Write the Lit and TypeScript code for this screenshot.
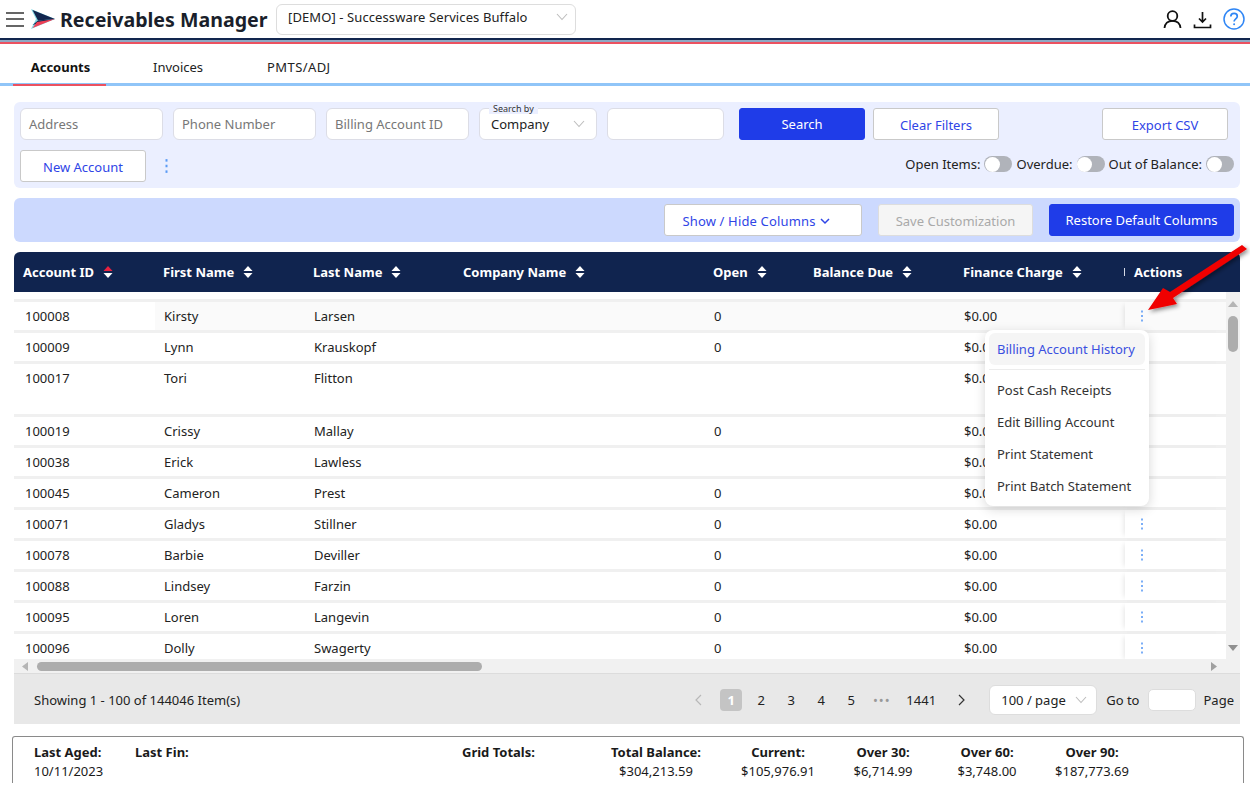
import { css, html, LitElement, nothing } from "lit";
import { customElement } from "lit/decorators.js";

const chevron = html`<svg class="chev" width="12" height="8" viewBox="0 0 12 8" fill="none" stroke="#bdbdbd" stroke-width="1.1"><path d="M1 1l5 5.5L11 1" /></svg>`;

const sorter = (active = false) => html`<svg class="sort" width="10" height="14" viewBox="0 0 10 14">
  <path d="M5 1l4.500 5h-9z" fill=${active ? "#e8213f" : "#fff"} />
  <path d="M5 13l4.500-5h-9z" fill="#fff" />
</svg>`;

const dots = html`<svg class="dots" width="4" height="12" viewBox="0 0 4 12" fill="#5b9bf5">
  <rect x="1.200" y="0.500" width="1.600" height="2" /><rect x="1.200" y="5" width="1.600" height="2" /><rect x="1.200" y="9.500" width="1.600" height="2" />
</svg>`;

const columns = [
  { label: "Account ID", active: true },
  { label: "First Name" },
  { label: "Last Name" },
  { label: "Company Name" },
  { label: "Open" },
  { label: "Balance Due" },
  { label: "Finance Charge" },
];

const rows = [
  ["100008", "Kirsty", "Larsen", "0"],
  ["100009", "Lynn", "Krauskopf", "0"],
  ["100017", "Tori", "Flitton", ""],
  ["100019", "Crissy", "Mallay", "0"],
  ["100038", "Erick", "Lawless", ""],
  ["100045", "Cameron", "Prest", "0"],
  ["100071", "Gladys", "Stillner", "0"],
  ["100078", "Barbie", "Deviller", "0"],
  ["100088", "Lindsey", "Farzin", "0"],
  ["100095", "Loren", "Langevin", "0"],
  ["100096", "Dolly", "Swagerty", "0"],
];

const totals = [
  ["Total Balance:", "$304,213.59"],
  ["Current:", "$105,976.91"],
  ["Over 30:", "$6,714.99"],
  ["Over 60:", "$3,748.00"],
  ["Over 90:", "$187,773.69"],
];

@customElement("app-root")
export class AppRoot extends LitElement {
  static styles = css`
    :host {
      display: block;
      position: relative;
      height: 791px;
      overflow: hidden;
      background: #fff;
      color: #222;
      font-family: "Noto Sans", "Open Sans", Arial, sans-serif;
      font-size: 13px;
      --cols: 141px 150px 150px 250px 100px 150px 170px 101px;
    }
    svg {
      display: block;
      flex: none;
    }

    .top {
      height: 38px;
      display: flex;
      align-items: center;
      padding: 0 5px 0 6px;
    }
    .burger {
      width: 18px;
      height: 15px;
      margin: 0 7px 0 0;
      display: flex;
      flex-direction: column;
      justify-content: space-between;
    }
    .burger i {
      height: 2px;
      background: #666;
    }
    .title {
      width: 208px;
      font-size: 19.600px;
      font-weight: 700;
      color: #1a1f2b;
      margin: 0 8px 0 5px;
      white-space: nowrap;
    }
    .tenant {
      width: 300px;
      height: 31px;
      box-sizing: border-box;
      border: 1px solid #ddd;
      border-radius: 6px;
      display: flex;
      align-items: center;
      justify-content: space-between;
      padding: 0 7px 4px 11px;
    }
    .tenant span {
      letter-spacing: 0.1px;
    }
    .top-icons {
      margin-left: auto;
      display: flex;
      align-items: center;
      gap: 11px;
    }
    .rule {
      height: 6px;
      background: linear-gradient(#12264f 0 2px, #8fa9c4 2px 4px, #ec5160 4px);
    }

    .tabs {
      height: 39px;
      display: flex;
      position: relative;
      border-bottom: 3px solid #90c5f8;
      padding-left: 13px;
    }
    .tab {
      display: flex;
      align-items: center;
      padding-top: 7px;
    }
    .tab.on {
      width: 93px;
      justify-content: center;
      font-weight: 700;
      color: #111;
      border-bottom: 2px solid #ec5160;
      margin-bottom: -3px;
      padding-left: 2px;
      padding-top: 6px;
      box-sizing: border-box;
      height: 42px;
    }
    .tab.inv {
      margin-left: 47px;
    }
    .tab.pmt {
      margin-left: 64px;
      letter-spacing: 0.4px;
    }

    .filters {
      margin: 16px 10px 0 14px;
      height: 86px;
      box-sizing: border-box;
      background: #ebefff;
      border-radius: 6px;
      padding: 6px;
      display: flex;
      flex-direction: column;
      gap: 10px;
    }
    .line {
      display: flex;
      align-items: center;
      height: 32px;
    }
    .field {
      width: 143px;
      height: 32px;
      box-sizing: border-box;
      margin-right: 10px;
      background: #fff;
      border: 1px solid #dcdde6;
      border-radius: 6px;
      display: flex;
      align-items: center;
      justify-content: space-between;
      padding: 0 8px;
      color: #777;
    }
    .search-by {
      position: relative;
      width: 118px;
      color: #222;
      padding: 0 11px;
    }
    .search-by label {
      position: absolute;
      left: 9px;
      top: -5px;
      padding: 0 4px;
      font-size: 9px;
      line-height: 10px;
      color: #333;
      background: #ebefff;
    }
    .blank {
      width: 117px;
      margin-right: 15px;
    }
    .btn {
      width: 126px;
      height: 32px;
      box-sizing: border-box;
      padding-top: 2px;
      background: #fff;
      border: 1px solid #c9c9c9;
      border-radius: 3px;
      display: flex;
      align-items: center;
      justify-content: center;
      gap: 4px;
      color: #2f45e6;
      white-space: nowrap;
    }
    .btn.primary {
      padding-top: 0;
      background: #1f3ce8;
      border-color: #1f3ce8;
      color: #fff;
    }
    .clear {
      margin-left: 8px;
    }
    .export {
      margin-left: auto;
      margin-right: 6px;
    }
    .more {
      margin-left: 18px;
    }
    .more svg {
      width: 5px;
      height: 16px;
    }
    .toggles {
      margin-left: auto;
      display: flex;
      align-items: center;
      gap: 4px;
      padding-bottom: 4px;
    }
    .switch {
      width: 28px;
      height: 16px;
      border-radius: 8px;
      background: #b0b3ba;
      box-sizing: border-box;
      padding: 0.500px;
    }
    .switch i {
      display: block;
      width: 15px;
      height: 15px;
      border-radius: 50%;
      background: #fff;
    }

    .columns-bar {
      margin: 10px 10px 0 14px;
      height: 44px;
      box-sizing: border-box;
      padding: 6px;
      background: #ccd9fe;
      border-radius: 6px;
      display: flex;
      justify-content: flex-end;
      gap: 16px;
    }
    .show {
      width: 198px;
      padding-right: 14px;
      letter-spacing: 0.150px;
    }
    .save {
      width: 155px;
      background: #f5f5f5;
      color: #a9a9a9;
      border-color: #ddd;
    }
    .restore {
      width: 185px;
    }

    .table {
      margin: 10px 10px 0 14px;
    }
    .thead,
    .row {
      display: grid;
      grid-template-columns: var(--cols);
    }
    .thead {
      height: 40px;
      background: #10244f;
      color: #fff;
      font-weight: 700;
      border-radius: 6px 6px 0 0;
    }
    .th {
      display: flex;
      align-items: center;
      gap: 9px;
      padding-left: 8px;
      white-space: nowrap;
    }
    .th:first-child {
      padding-left: 9px;
    }
    .th .sliver {
      margin-left: auto;
      width: 1px;
      height: 8px;
      background: #d5dae6;
    }
    .th.last {
      padding-left: 9px;
    }
    .body {
      display: flex;
      height: 367px;
    }
    .rows {
      width: 1212px;
      padding-top: 7px;
      box-sizing: border-box;
      overflow: hidden;
    }
    .row {
      height: 31px;
      box-sizing: border-box;
      border-top: 3px solid #f0f0f0;
    }
    .row.tall {
      height: 53px;
    }
    .row.hover .td:not(:first-child) {
      background: #fafafa;
    }
    .td {
      padding-left: 9px;
      line-height: 28px;
      white-space: nowrap;
    }
    .td:first-child {
      padding-left: 11px;
    }
    .td.act {
      box-shadow: -4px 0 5px -3px rgba(0, 0, 0, 0.1);
      padding-left: 15px;
      padding-top: 8px;
      box-sizing: border-box;
    }
    .vbar {
      width: 14px;
      background: #f1f1f1;
      display: flex;
      flex-direction: column;
      align-items: center;
    }
    .vbar .thumb {
      width: 10px;
      height: 36px;
      margin-top: 9px;
      border-radius: 5px;
      background: #adadad;
    }
    .vbar .up {
      margin-top: 9px;
    }
    .vbar .down {
      margin-top: auto;
      margin-bottom: 8px;
    }
    .hbar {
      height: 15px;
      box-sizing: border-box;
      background: #f1f1f1;
      border-bottom: 1px solid #dcdcdc;
      display: flex;
      align-items: center;
      padding: 0 23px 0 8px;
    }
    .hbar .thumb {
      width: 445px;
      height: 9px;
      margin-left: 9px;
      border-radius: 5px;
      background: #adadad;
    }
    .hbar .right {
      margin-left: auto;
    }

    .pager {
      height: 50px;
      box-sizing: border-box;
      padding: 1px 6px 0 20px;
      background: #e8e8e8;
      display: flex;
      align-items: center;
    }
    .pages {
      margin-left: auto;
      display: flex;
      align-items: center;
    }
    .prev {
      margin-right: 14px;
    }
    .next {
      margin-left: 13px;
    }
    .pg {
      width: 30px;
      text-align: center;
    }
    .pg.on {
      width: 22px;
      height: 22px;
      line-height: 22px;
      margin: 0 4px;
      background: #c4c4c4;
      color: #fff;
      font-weight: 700;
      border-radius: 4px;
    }
    .pg.far {
      width: 48px;
    }
    .ell {
      width: 31px;
      text-align: center;
      color: #999;
      letter-spacing: 1px;
    }
    .size {
      width: 108px;
      height: 30px;
      box-sizing: border-box;
      margin: 0 9px 0 23px;
      background: #fff;
      border: 1px solid #ddd;
      border-radius: 6px;
      display: flex;
      align-items: center;
      justify-content: space-between;
      padding: 0 9px 0 11px;
    }
    .goto {
      width: 48px;
      height: 22px;
      box-sizing: border-box;
      margin: 0 8px;
      background: #fff;
      border: 1px solid #ddd;
      border-radius: 5px;
    }

    .summary {
      margin: 12px 6px 0 12px;
      height: 47px;
      box-sizing: border-box;
      border: 1px solid #8a8a8a;
      border-bottom: none;
      border-radius: 3px 3px 0 0;
      padding: 6px 0 0 21px;
      display: grid;
      grid-template-columns: 101px 327px 135px 118px 126px 84px 124px 86px;
      line-height: 19px;
      color: #1a1a1a;
    }
    .summary b {
      display: block;
      font-weight: 700;
    }
    .summary .mid {
      text-align: center;
    }

    .menu {
      position: absolute;
      left: 985px;
      top: 330px;
      width: 164px;
      height: 176px;
      box-sizing: border-box;
      padding: 3px 4px;
      background: #fff;
      border-radius: 8px;
      box-shadow: 0 3px 12px rgba(0, 0, 0, 0.16);
      color: #333;
    }
    .menu div {
      height: 32px;
      line-height: 32px;
      padding-left: 8px;
      white-space: nowrap;
    }
    .menu .first {
      color: #3a50e0;
      background: #f5f5f5;
      border-radius: 6px;
    }
    .menu hr {
      margin: 4px 0;
      border: none;
      border-top: 1px solid #ececec;
    }
    .arrow {
      position: absolute;
      left: 1140px;
      top: 238px;
    }
  `;

  render() {
    return html`
      <div class="top">
        <div class="burger"><i></i><i></i><i></i></div>
        <svg width="24" height="20" viewBox="0 0 24 20">
          <path d="M0 0l5 10-5 10 24-10z" fill="#86dbe6" />
          <path d="M1.500 1L24 10 7 11.500z" fill="#12264f" />
          <path d="M7 11.500L24 10 1.500 16z" fill="#12264f" />
          <path d="M1.500 19L6 13l18-3z" fill="#ef3f55" />
        </svg>
        <div class="title">Receivables Manager</div>
        <div class="tenant"><span>[DEMO] - Successware Services Buffalo</span>${chevron}</div>
        <div class="top-icons">
          <svg width="19" height="19" viewBox="0 0 19 19" fill="none" stroke="#111" stroke-width="1.800">
            <circle cx="9.500" cy="6" r="4.800" /><path d="M1.500 18c.5-4.500 3.500-7.200 8-7.200s7.500 2.700 8 7.200" />
          </svg>
          <svg width="19" height="19" viewBox="0 0 19 19" fill="none" stroke="#111" stroke-width="1.700">
            <path d="M9.500 2v10M6 8.500l3.500 3.500L13 8.500M1.500 14.500v3h16v-3" />
          </svg>
          <svg width="22" height="22" viewBox="0 0 22 22" fill="none" stroke="#2f86f5" stroke-width="1.500">
            <circle cx="11" cy="11" r="10" />
            <path d="M7.800 8.500c0-2 1.500-3.200 3.300-3.200s3.200 1.200 3.200 2.900c0 2.600-3.200 2.600-3.200 5.300" stroke-width="1.700" />
            <circle cx="11.100" cy="16.300" r="1" fill="#2f86f5" stroke="none" />
          </svg>
        </div>
      </div>
      <div class="rule"></div>
      <div class="tabs">
        <div class="tab on">Accounts</div>
        <div class="tab inv">Invoices</div>
        <div class="tab pmt">PMTS/ADJ</div>
      </div>

      <div class="filters">
        <div class="line">
          <div class="field">Address</div>
          <div class="field">Phone Number</div>
          <div class="field">Billing Account ID</div>
          <div class="field search-by"><label>Search by</label><span>Company</span>${chevron}</div>
          <div class="field blank"></div>
          <div class="btn primary">Search</div>
          <div class="btn clear">Clear Filters</div>
          <div class="btn export">Export CSV</div>
        </div>
        <div class="line">
          <div class="btn">New Account</div>
          <div class="more">${dots}</div>
          <div class="toggles">
            <span>Open Items:</span><div class="switch"><i></i></div>
            <span>Overdue:</span><div class="switch"><i></i></div>
            <span>Out of Balance:</span><div class="switch"><i></i></div>
          </div>
        </div>
      </div>

      <div class="columns-bar">
        <div class="btn show">
          Show / Hide Columns
          <svg width="10" height="7" viewBox="0 0 10 7" fill="none" stroke="#2f45e6" stroke-width="1.500"><path d="M1 1l4 4 4-4" /></svg>
        </div>
        <div class="btn save">Save Customization</div>
        <div class="btn primary restore">Restore Default Columns</div>
      </div>

      <div class="table">
        <div class="thead">
          ${columns.map(
            (c, i) => html`<div class="th">
              <span>${c.label}</span>${sorter(c.active)}
              ${i === 6 ? html`<i class="sliver"></i>` : nothing}
            </div>`
          )}
          <div class="th last">Actions</div>
        </div>
        <div class="body">
          <div class="rows">
            ${rows.map(
              (r, i) => html`<div class="row ${i === 2 ? "tall" : ""} ${i === 0 ? "hover" : ""}">
                <div class="td">${r[0]}</div>
                <div class="td">${r[1]}</div>
                <div class="td">${r[2]}</div>
                <div class="td"></div>
                <div class="td">${r[3] || nothing}</div>
                <div class="td"></div>
                <div class="td">$0.00</div>
                <div class="td act">${dots}</div>
              </div>`
            )}
          </div>
          <div class="vbar">
            <svg class="up" width="10" height="6" viewBox="0 0 10 6"><path d="M5 0l5 6H0z" fill="#b5b5b5" /></svg>
            <div class="thumb"></div>
            <svg class="down" width="10" height="6" viewBox="0 0 10 6"><path d="M5 6l5-6H0z" fill="#8f8f8f" /></svg>
          </div>
        </div>
        <div class="hbar">
          <svg width="6" height="9" viewBox="0 0 6 9"><path d="M0 4.500L6 0v9z" fill="#b5b5b5" /></svg>
          <div class="thumb"></div>
          <svg class="right" width="6" height="9" viewBox="0 0 6 9"><path d="M6 4.500L0 0v9z" fill="#a0a0a0" /></svg>
        </div>
        <div class="pager">
          <span>Showing 1 - 100 of 144046 Item(s)</span>
          <div class="pages">
            <svg class="prev" width="8" height="12" viewBox="0 0 8 12" fill="none" stroke="#b8b8b8" stroke-width="1.200"><path d="M7 1L2 6l5 5" /></svg>
            <div class="pg on">1</div>
            <div class="pg">2</div>
            <div class="pg">3</div>
            <div class="pg">4</div>
            <div class="pg">5</div>
            <div class="ell">•••</div>
            <div class="pg far">1441</div>
            <svg class="next" width="8" height="12" viewBox="0 0 8 12" fill="none" stroke="#333" stroke-width="1.200"><path d="M1 1l5 5-5 5" /></svg>
            <div class="size"><span>100 / page</span>${chevron}</div>
            <span>Go to</span>
            <div class="goto"></div>
            <span>Page</span>
          </div>
        </div>
      </div>

      <div class="summary">
        <div><b>Last Aged:</b>10/11/2023</div>
        <div><b>Last Fin:</b></div>
        <div><b>Grid Totals:</b></div>
        ${totals.map((t) => html`<div class="mid"><b>${t[0]}</b>${t[1]}</div>`)}
      </div>

      <div class="menu">
        <div class="first">Billing Account History</div>
        <hr />
        <div>Post Cash Receipts</div>
        <div>Edit Billing Account</div>
        <div>Print Statement</div>
        <div>Print Batch Statement</div>
      </div>

      <svg class="arrow" width="110" height="80" viewBox="0 0 110 80">
        <defs>
          <filter id="sh" x="-20%" y="-20%" width="140%" height="140%">
            <feDropShadow dx="2" dy="2" stdDeviation="2" flood-color="#000" flood-opacity="0.45" />
          </filter>
        </defs>
        <path d="M8 72L23 50l7 4L102 7l5 4-74 49 4 6z" fill="#f00000" filter="url(#sh)" />
      </svg>
    `;
  }
}
